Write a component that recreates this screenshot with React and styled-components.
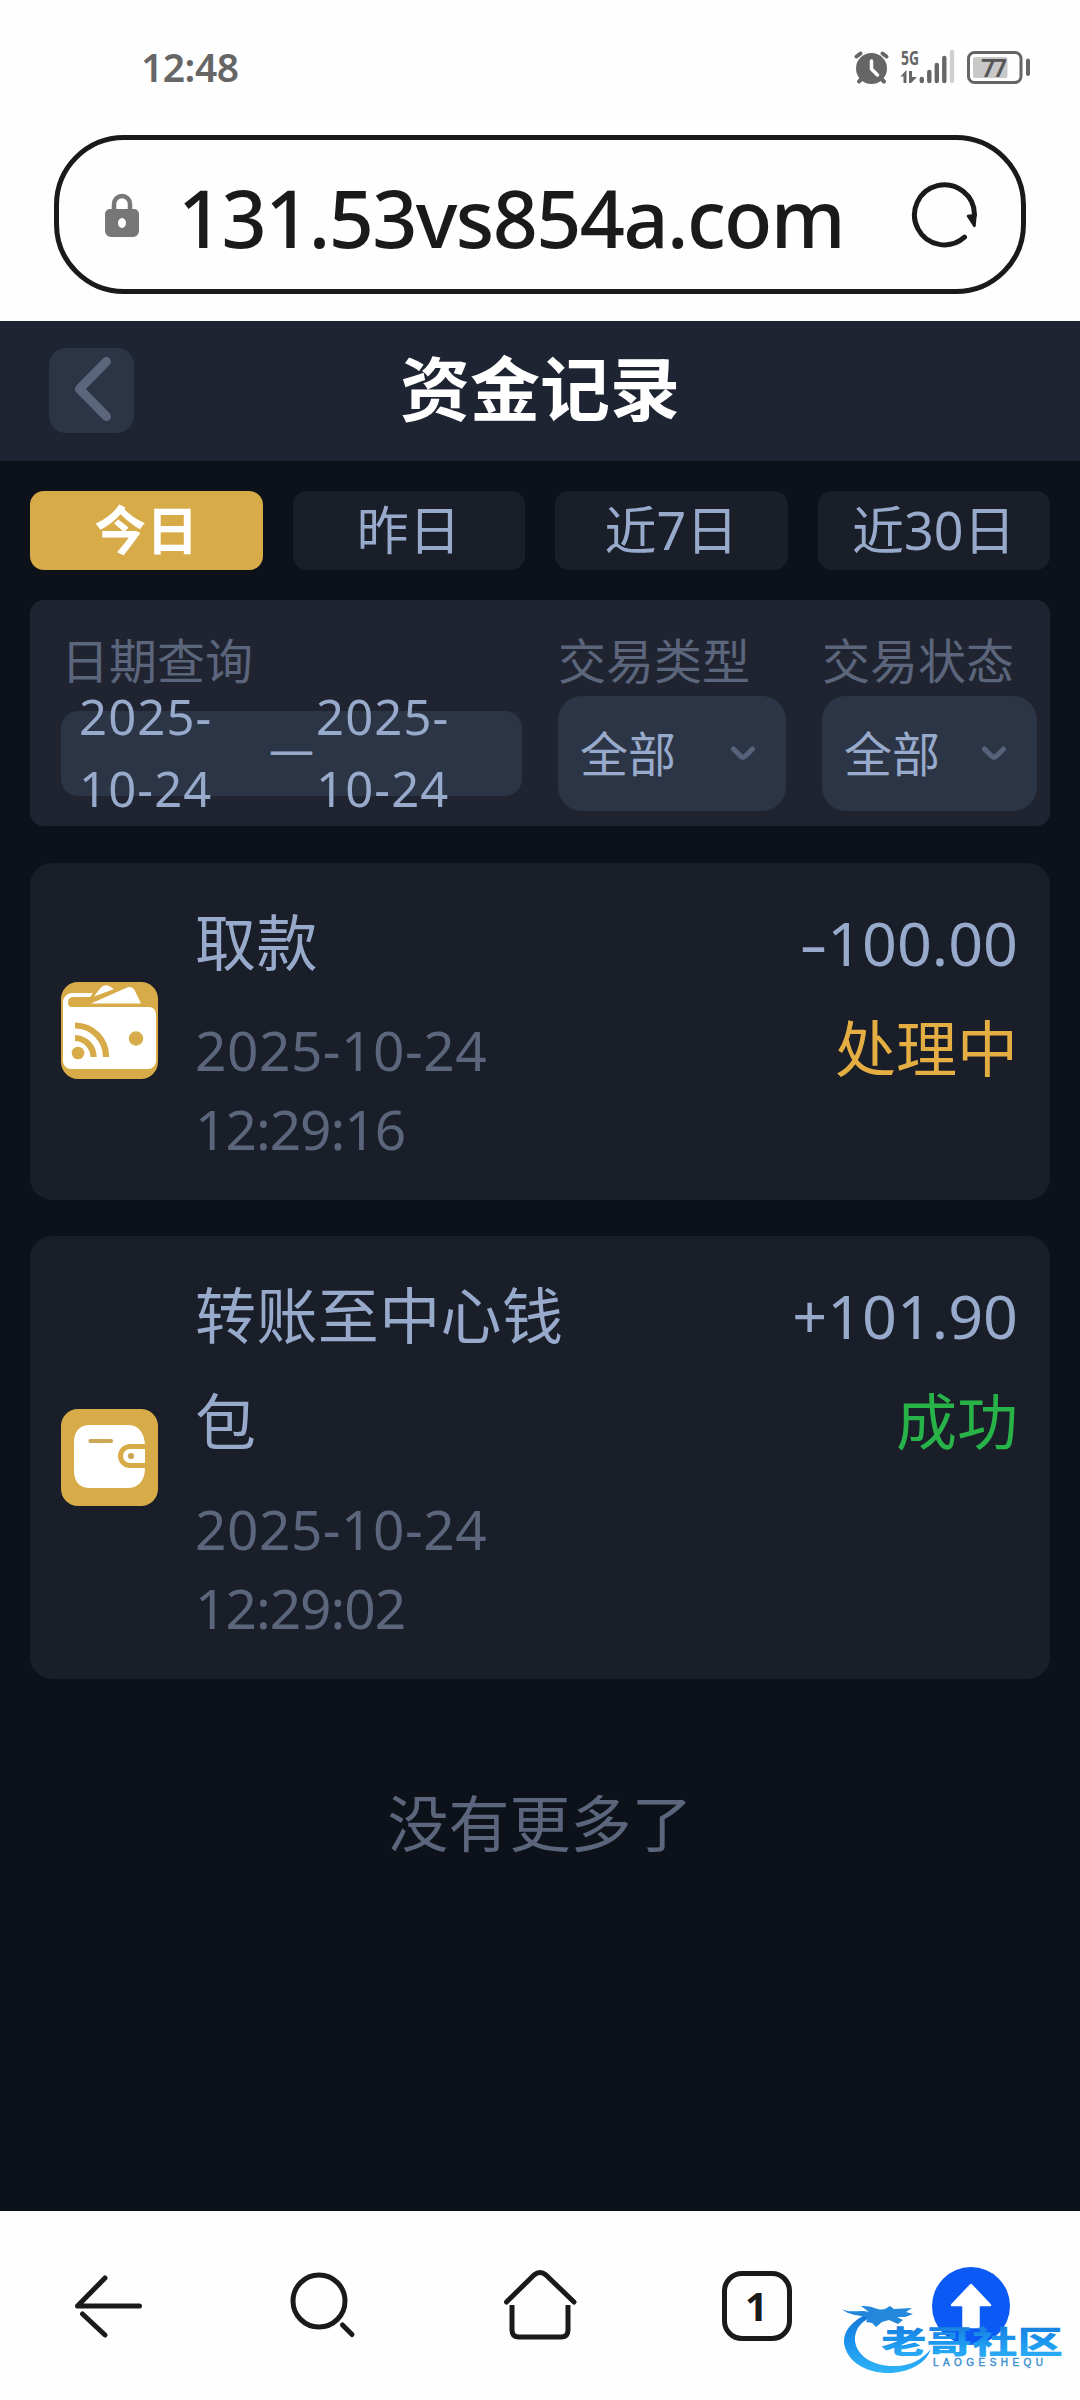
import React from 'react';
import styled, { createGlobalStyle } from 'styled-components';

const GlobalStyle = createGlobalStyle`
  * {
    box-sizing: border-box;
  }
  body {
    margin: 0;
    background: #0d1119;
    font-family: 'Noto Sans', 'Noto Sans CJK SC', sans-serif;
  }
`;

const Screen = styled.div`
  position: relative;
  width: 1080px;
  height: 2400px;
  display: flex;
  flex-direction: column;
  overflow: hidden;
`;

const BrowserTop = styled.div`
  height: 321px;
  background: #fefefe;
`;

const StatusBar = styled.div`
  height: 135px;
  padding: 0 48px 2px 141px;
  display: flex;
  align-items: center;
  justify-content: space-between;
`;

const Clock = styled.span`
  font-size: 39px;
  font-weight: 600;
  letter-spacing: -0.5px;
  color: #666;
`;

const AddressBar = styled.div`
  height: 159px;
  margin: 0 54px;
  padding: 0 41px 0 46px;
  display: flex;
  align-items: center;
  border: 5px solid #1a1a1a;
  border-radius: 70px;
`;

const Url = styled.span`
  flex: 1;
  margin-left: 39px;
  padding-top: 7px;
  font-size: 79px;
  font-weight: 500;
  line-height: 100px;
  letter-spacing: -1.6px;
  white-space: nowrap;
  color: #1a1a1a;
`;

const Header = styled.header`
  height: 140px;
  padding: 0 49px 1px;
  display: grid;
  grid-template-columns: 85px 1fr 85px;
  align-items: center;
  background: #1f2433;
`;

const BackButton = styled.button`
  width: 85px;
  height: 85px;
  padding: 0;
  border: none;
  border-radius: 17px;
  background: #2c3545;
  svg {
    display: block;
  }
`;

const PageTitle = styled.h1`
  margin: 0;
  padding-bottom: 4px;
  text-align: center;
  font-size: 70px;
  line-height: 100px;
  font-weight: 700;
  color: #fff;
`;

const Content = styled.main`
  flex: 1;
  padding: 30px 30px 0;
`;

const Tabs = styled.div`
  display: grid;
  grid-template-columns: repeat(4, 1fr);
  gap: 30px;
`;

const Tab = styled.div`
  height: 79px;
  border-radius: 14px;
  text-align: center;
  font-size: 52px;
  line-height: 78px;
  font-weight: ${(props) => (props.$active ? 700 : 400)};
  color: ${(props) => (props.$active ? '#fff' : '#98aacb')};
  background: ${(props) => (props.$active ? '#d8ab49' : '#1a1e29')};
`;

const Filters = styled.div`
  height: 226px;
  margin-top: 30px;
  padding: 30px 13px 0 31px;
  display: grid;
  grid-template-columns: 461px 228px 215px;
  column-gap: 36px;
  border-radius: 14px;
  background: #202430;
`;

const FilterLabel = styled.div`
  height: 66px;
  font-size: 48px;
  line-height: 62px;
  color: #5b657c;
`;

const DateRange = styled.div`
  height: 85px;
  margin-top: 15px;
  padding: 0 0 3px 18px;
  display: flex;
  align-items: center;
  border-radius: 17px;
  background: #2c3545;
  font-size: 49px;
  line-height: 72px;
  letter-spacing: 1.1px;
  color: #98aacb;
`;

const DateValue = styled.span`
  width: 188px;
`;

const DateDash = styled.span`
  width: 49px;
  padding: 0 0 9px 2px;
  font-size: 45px;
`;

const Select = styled.div`
  height: 115px;
  padding: 0 30px 0 22px;
  display: flex;
  align-items: center;
  justify-content: space-between;
  border-radius: 24px;
  background: #2c3545;
  font-size: 48px;
  color: #98aacb;
  span {
    padding-bottom: 5px;
  }
`;

const Record = styled.section`
  margin-top: 36.5px;
  padding: 27px 32px 31px 31px;
  display: flex;
  align-items: center;
  border-radius: 22px;
  background: #1a1e29;
`;

const RecordIcon = styled.svg`
  flex: none;
  width: 97px;
  height: 97px;
  margin-top: 3px;
  border-radius: 17px;
  background: #d8ab49;
`;

const RecordBody = styled.div`
  width: 400px;
  margin-left: 37px;
`;

const RecordName = styled.div`
  font-size: 61px;
  line-height: 106px;
  letter-spacing: 0.4px;
  color: #98aacb;
`;

const RecordTime = styled.div`
  display: flex;
  flex-direction: column;
  margin-top: 14px;
  padding-bottom: 1px;
  font-size: 55px;
  line-height: 79px;
  color: #5b657c;
`;

const DatePart = styled.span`
  letter-spacing: 0.5px;
`;

const ClockPart = styled.span`
  letter-spacing: -1px;
`;

const RecordSide = styled.div`
  flex: 1;
  align-self: flex-start;
  text-align: right;
  font-size: 61px;
  line-height: 106px;
`;

const Amount = styled.div`
  color: #98aacb;
`;

// wider minus than the font's hyphen
const Sign = styled.span`
  display: inline-block;
  transform: ${(props) => (props.$minus ? 'scaleX(1.45)' : 'none')};
  transform-origin: right center;
`;

const Status = styled.div`
  color: ${(props) => (props.$done ? '#28b349' : '#e5ae42')};
`;

const NoMore = styled.p`
  margin: 92px 0 0;
  text-align: center;
  font-size: 61px;
  line-height: 106px;
  color: #5b657c;
`;

const BottomNav = styled.nav`
  height: 189px;
  display: grid;
  grid-template-columns: repeat(5, 1fr);
  justify-items: center;
  padding-top: 56px;
  background: #fefefe;
  svg {
    display: block;
  }
`;

const TabCount = styled.div`
  width: 70px;
  height: 70px;
  margin: 4px 0 0 1px;
  border: 5px solid #1a1a1a;
  border-radius: 20px;
  text-align: center;
  font-size: 40px;
  line-height: 59px;
  font-weight: 700;
  color: #1a1a1a;
`;

const Watermark = styled.svg`
  position: absolute;
  left: 840px;
  top: 2295px;
`;

const StatusIcons = () => (
  <svg width="182" height="50" viewBox="850 40 182 50">
    <g fill="#666" stroke="#666" strokeLinecap="round">
      <circle cx="871.5" cy="66.5" r="15.5" stroke="none" />
      <path d="M856.500 54.500l4-3M886.500 54.500l-4-3M859 79.500l3-3M884 79.500l-3-3" strokeWidth="4" />
    </g>
    <path d="M871.500 59v8l6 6" fill="none" stroke="#fefefe" strokeWidth="3.500" strokeLinecap="round" />
    <text x="901" y="62.500" textLength="18" lengthAdjust="spacingAndGlyphs" fontSize="20" fontWeight="700" fill="#666">
      5G
    </text>
    <path d="M900.500 74.500l6-6.500v13h-3v-6.500zM909 69h3v6h5l-6 6h-2z" fill="#666" />
    <g stroke="#666" strokeWidth="4.400" strokeLinecap="round">
      <path d="M921.800 77v2M929.300 70v9M936.800 63v16M944.300 56v23" />
      <path d="M952 50v29" stroke="#d0d0d0" />
    </g>
    <rect x="968.500" y="50.500" width="52.500" height="30" rx="6" fill="none" stroke="#666" strokeWidth="3" />
    <rect x="973" y="55" width="34.500" height="21" rx="2" fill="#c8c8c8" />
    <rect x="1026" y="56.500" width="4" height="17.500" rx="2" fill="#666" />
    <text x="981" y="75" textLength="26" fontSize="25" fontWeight="600" fill="#555">
      77
    </text>
  </svg>
);

const LockIcon = () => (
  <svg width="34" height="46" viewBox="0 0 34 46">
    <path d="M9 18v-6a8 8 0 0 1 16 0v6" fill="none" stroke="#777" strokeWidth="4.500" />
    <path
      d="M5 17h24a5 5 0 0 1 5 5v17a6 6 0 0 1-6 6h-22a6 6 0 0 1-6-6v-17a5 5 0 0 1 5-5zM17 26a4 5 0 1 0 0.010 0z"
      fill="#777"
      fillRule="evenodd"
    />
  </svg>
);

const ReloadIcon = () => (
  <svg width="70" height="70" viewBox="0 1 70 70">
    <path d="M54.500 58.200A30 30 0 1 1 64.500 36" fill="none" stroke="#1a1a1a" strokeWidth="5" strokeLinecap="round" />
    <path d="M58 37l7.500-1-1 11z" fill="#1a1a1a" stroke="#1a1a1a" strokeWidth="2.500" strokeLinejoin="round" />
  </svg>
);

const ChevronDown = () => (
  <svg width="26" height="18" viewBox="0 0 26 18">
    <path
      d="M3.500 4l7 7q2.500 2.500 5 0l7-7"
      fill="none"
      stroke="#56627a"
      strokeWidth="5"
      strokeLinecap="round"
      strokeLinejoin="round"
    />
  </svg>
);

const WithdrawIcon = () => (
  <RecordIcon viewBox="0 0 97 97">
    <g fill="#fff">
      <path d="M2 20a9 9 0 0 1 9-9h21l-3 4H12a5 5 0 0 0-5 5c0 3 1 5 4 5h77a7 7 0 0 1 7 7v47a8 8 0 0 1-8 8H10a8 8 0 0 1-8-8z" />
      <path d="M33 14.500l6-8q4-5 9-2.500l5 3z" />
      <path d="M30 21.500L65 6q6-3 9 3l6 12.500z" />
    </g>
    <g fill="none" stroke="#d8ab49" strokeWidth="6.200">
      <path d="M14 43.500a31 31 0 0 1 31 31.500" />
      <path d="M14 56a19 19 0 0 1 18.500 19" />
    </g>
    <circle cx="17" cy="71" r="6.300" fill="#d8ab49" />
    <circle cx="75" cy="56.500" r="7.200" fill="#d8ab49" />
  </RecordIcon>
);

const TransferIcon = () => (
  <RecordIcon viewBox="0 0 97 97">
    <path
      d="M29 16h38c10 0 16 7 17 19H69a12 12 0 0 0 0 24h15c0 13-7 20-17 20H29c-10 0-16-6-16-17V33c0-11 6-17 16-17z"
      fill="#fff"
    />
    <path d="M84 40v14H69a7 7 0 0 1 0-14z" fill="#fff" />
    <path d="M29.500 32h20.500" stroke="#c9a754" strokeWidth="4.200" strokeLinecap="round" />
    <circle cx="70" cy="47" r="3.100" fill="#c9a754" />
  </RecordIcon>
);

const NavIcon = ({ children }) => (
  <svg
    width="80"
    height="80"
    viewBox="0 0 80 80"
    fill="none"
    stroke="#1a1a1a"
    strokeWidth="5"
    strokeLinecap="round"
    strokeLinejoin="round"
  >
    {children}
  </svg>
);

const records = [
  {
    name: '取款',
    date: '2025-10-24',
    clock: '12:29:16',
    sign: '-',
    amount: '100.00',
    status: '处理中',
    done: false,
    Icon: WithdrawIcon,
  },
  {
    name: '转账至中心钱包',
    date: '2025-10-24',
    clock: '12:29:02',
    sign: '+',
    amount: '101.90',
    status: '成功',
    done: true,
    Icon: TransferIcon,
  },
];

const tabs = ['今日', '昨日', '近7日', '近30日'];

export default function App() {
  return (
    <Screen>
      <GlobalStyle />
      <BrowserTop>
        <StatusBar>
          <Clock>12:48</Clock>
          <StatusIcons />
        </StatusBar>
        <AddressBar>
          <LockIcon />
          <Url>131.53vs854a.com</Url>
          <ReloadIcon />
        </AddressBar>
      </BrowserTop>

      <Header>
        <BackButton>
          <svg width="85" height="85" viewBox="0 0 85 85">
            <path
              d="M57.500 13.500L30.500 41l27 27.500"
              fill="none"
              stroke="#5b657c"
              strokeWidth="9"
              strokeLinecap="round"
              strokeLinejoin="round"
            />
          </svg>
        </BackButton>
        <PageTitle>资金记录</PageTitle>
      </Header>

      <Content>
        <Tabs>
          {tabs.map((tab, i) => (
            <Tab key={tab} $active={i === 0}>
              {tab}
            </Tab>
          ))}
        </Tabs>

        <Filters>
          <div>
            <FilterLabel>日期查询</FilterLabel>
            <DateRange>
              <DateValue>2025-10-24</DateValue>
              <DateDash>—</DateDash>
              <DateValue>2025-10-24</DateValue>
            </DateRange>
          </div>
          <div>
            <FilterLabel>交易类型</FilterLabel>
            <Select>
              <span>全部</span>
              <ChevronDown />
            </Select>
          </div>
          <div>
            <FilterLabel>交易状态</FilterLabel>
            <Select>
              <span>全部</span>
              <ChevronDown />
            </Select>
          </div>
        </Filters>

        {records.map(({ name, date, clock, sign, amount, status, done, Icon }) => (
          <Record key={clock}>
            <Icon />
            <RecordBody>
              <RecordName>{name}</RecordName>
              <RecordTime>
                <DatePart>{date}</DatePart>
                <ClockPart>{clock}</ClockPart>
              </RecordTime>
            </RecordBody>
            <RecordSide>
              <Amount>
                <Sign $minus={sign === '-'}>{sign}</Sign>
                {amount}
              </Amount>
              <Status $done={done}>{status}</Status>
            </RecordSide>
          </Record>
        ))}

        <NoMore>没有更多了</NoMore>
      </Content>

      <BottomNav>
        <NavIcon>
          <path d="M71.500 39H9.500L37 11M14.500 47l22.500 21" />
        </NavIcon>
        <NavIcon>
          <circle cx="35" cy="34" r="26" />
          <path d="M58.500 58l9.500 9.500" />
        </NavIcon>
        <NavIcon>
          <path d="M6.500 35L34 8q6-5 12 0L74 35" />
          <path d="M12 38v25q0 7 7 7h42q7 0 7-7V38" strokeLinecap="butt" />
        </NavIcon>
        <TabCount>1</TabCount>
        <svg width="80" height="80" viewBox="0 0 80 80">
          <circle cx="39" cy="39" r="39" fill="#0b5af5" />
          <path
            d="M39 18l19 20H46.500v22h-15V38H20z"
            fill="#fff"
            stroke="#fff"
            strokeWidth="2.500"
            strokeLinejoin="round"
          />
        </svg>
      </BottomNav>

      <Watermark width="230" height="85" viewBox="840 2295 230 85">
        <defs>
          <linearGradient id="wave" x1="0" y1="0" x2="0" y2="1">
            <stop offset="0" stopColor="#1674d6" />
            <stop offset="0.500" stopColor="#1b93ec" />
            <stop offset="1" stopColor="#2fb4f8" />
          </linearGradient>
        </defs>
        <path
          d="M871 2312C852 2320 843 2331 844 2343C847 2363 868 2374 892 2373C912 2371 926 2363 931 2349C922 2360 908 2367 893 2366C873 2366 857 2356 855 2341C854 2329 862 2319 878 2315z"
          fill="url(#wave)"
        />
        <path
          d="M842 2309c10 5 17 0 27 3l-8-6c12-1 16 5 24 3l5-3 4 3 18-1-6 4 7 2-8 3-8 0 6 3-5 4-9-4-7 2-6 5-4-4-6-1 2-4c-10-4-19-2-26-9z"
          fill="#2388dc"
        />
        <text
          x="881"
          y="2353"
          textLength="182"
          lengthAdjust="spacingAndGlyphs"
          fontFamily="Noto Sans CJK SC"
          fontSize="31"
          fontWeight="900"
          fill="url(#wave)"
        >
          老哥社区
        </text>
        <text x="933" y="2366" textLength="110" fontFamily="Liberation Sans" fontSize="10" fill="#3a8fd0" stroke="#3a8fd0" strokeWidth="0.400">
          LAOGESHEQU
        </text>
      </Watermark>
    </Screen>
  );
}
